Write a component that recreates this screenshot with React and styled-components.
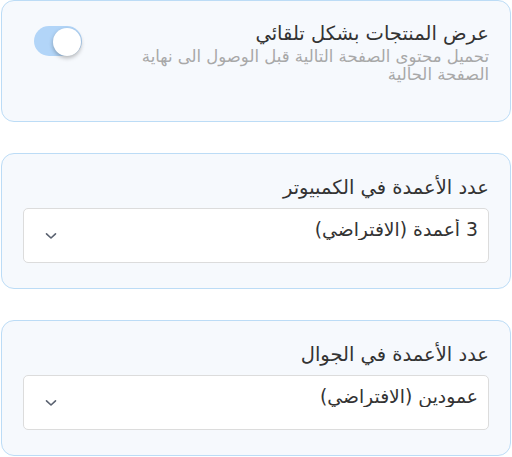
import styled, { createGlobalStyle } from "styled-components";
import { useState } from "react";

const GlobalStyle = createGlobalStyle`
  body {
    margin: 0;
    background: #ffffff;
    font-family: "DejaVu Sans", "Noto Sans", sans-serif;
  }
`;

const columnsDesktop = ["عمود واحد", "عمودين", "3 أعمدة (الافتراضي)", "4 أعمدة"];
const columnsMobile = ["عمود واحد", "عمودين (الافتراضي)", "3 أعمدة"];

export default function App() {
  const [auto, setAuto] = useState(true);
  const [desktop, setDesktop] = useState("3 أعمدة (الافتراضي)");
  const [mobile, setMobile] = useState("عمودين (الافتراضي)");

  return (
    <Page dir="rtl">
      <GlobalStyle />

      <Card $first>
        <ToggleRow>
          <TextBlock>
            <Title>عرض المنتجات بشكل تلقائي</Title>
            <Hint>تحميل محتوى الصفحة التالية قبل الوصول الى نهاية الصفحة الحالية</Hint>
          </TextBlock>
          <Switch $on={auto} onClick={() => setAuto(!auto)}>
            <Knob $on={auto} />
          </Switch>
        </ToggleRow>
      </Card>

      <Card>
        <Label>عدد الأعمدة في الكمبيوتر</Label>
        <SelectWrap>
          <Select value={desktop} onChange={(e) => setDesktop(e.target.value)}>
            {columnsDesktop.map((c) => (
              <option key={c}>{c}</option>
            ))}
          </Select>
          <Chevron />
        </SelectWrap>
      </Card>

      <Card>
        <Label>عدد الأعمدة في الجوال</Label>
        <SelectWrap>
          <Select value={mobile} onChange={(e) => setMobile(e.target.value)}>
            {columnsMobile.map((c) => (
              <option key={c}>{c}</option>
            ))}
          </Select>
          <Chevron />
        </SelectWrap>
      </Card>
    </Page>
  );
}

function Chevron() {
  return (
    <ChevronIcon width="12" height="8" viewBox="0 0 12 8">
      <path d="M1.5 1.8 L6 6 L10.5 1.8" fill="none" stroke="#5a6270" strokeWidth="1.6" strokeLinecap="round" strokeLinejoin="round" />
    </ChevronIcon>
  );
}

const Page = styled.div`
  display: flex;
  flex-direction: column;
  gap: 31px;
  padding: 0 1px;
`;

const Card = styled.div`
  background: #f6f9fd;
  border: 1px solid #bcdcf6;
  border-radius: 13px;
  padding: ${(p) => (p.$first ? "19px 21px 20px 21px" : "20px 21px 25px 21px")};
  box-sizing: border-box;
  height: ${(p) => (p.$first ? "122px" : "auto")};
`;

const ToggleRow = styled.div`
  display: flex;
  justify-content: space-between;
  align-items: flex-start;
`;

const TextBlock = styled.div`
  display: flex;
  flex-direction: column;
  max-width: 372px;
`;

const Title = styled.div`
  font-size: 19.5px;
  line-height: 28px;
  color: #333333;
`;

const Hint = styled.div`
  font-size: 16.5px;
  line-height: 18px;
  color: #a8a8a8;
`;

const Switch = styled.button`
  position: relative;
  width: 48px;
  height: 30px;
  margin: 6px 0 0 11px;
  padding: 0;
  border: none;
  border-radius: 15px;
  background: ${(p) => (p.$on ? "#b2d5f8" : "#d9d9d9")};
  cursor: pointer;
  flex-shrink: 0;
`;

const Knob = styled.span`
  position: absolute;
  top: 2px;
  left: ${(p) => (p.$on ? "19px" : "1px")};
  width: 28px;
  height: 28px;
  border-radius: 50%;
  background: #ffffff;
  box-shadow: 0 2px 4px rgba(0, 0, 0, 0.28);
`;

const Label = styled.div`
  font-size: 19.5px;
  line-height: 27px;
  color: #333333;
  margin-bottom: 7px;
`;

const SelectWrap = styled.div`
  position: relative;
`;

const Select = styled.select`
  display: block;
  width: 100%;
  height: 55px;
  box-sizing: border-box;
  appearance: none;
  -webkit-appearance: none;
  background: #ffffff;
  border: 1px solid #dcdcdc;
  border-radius: 5px;
  padding: 0 10px 12px 40px;
  font-family: "DejaVu Sans", "Noto Sans", sans-serif;
  font-size: 18.8px;
  color: #333333;
  outline: none;
`;

const ChevronIcon = styled.svg`
  position: absolute;
  left: 22px;
  top: 24px;
  pointer-events: none;
`;
